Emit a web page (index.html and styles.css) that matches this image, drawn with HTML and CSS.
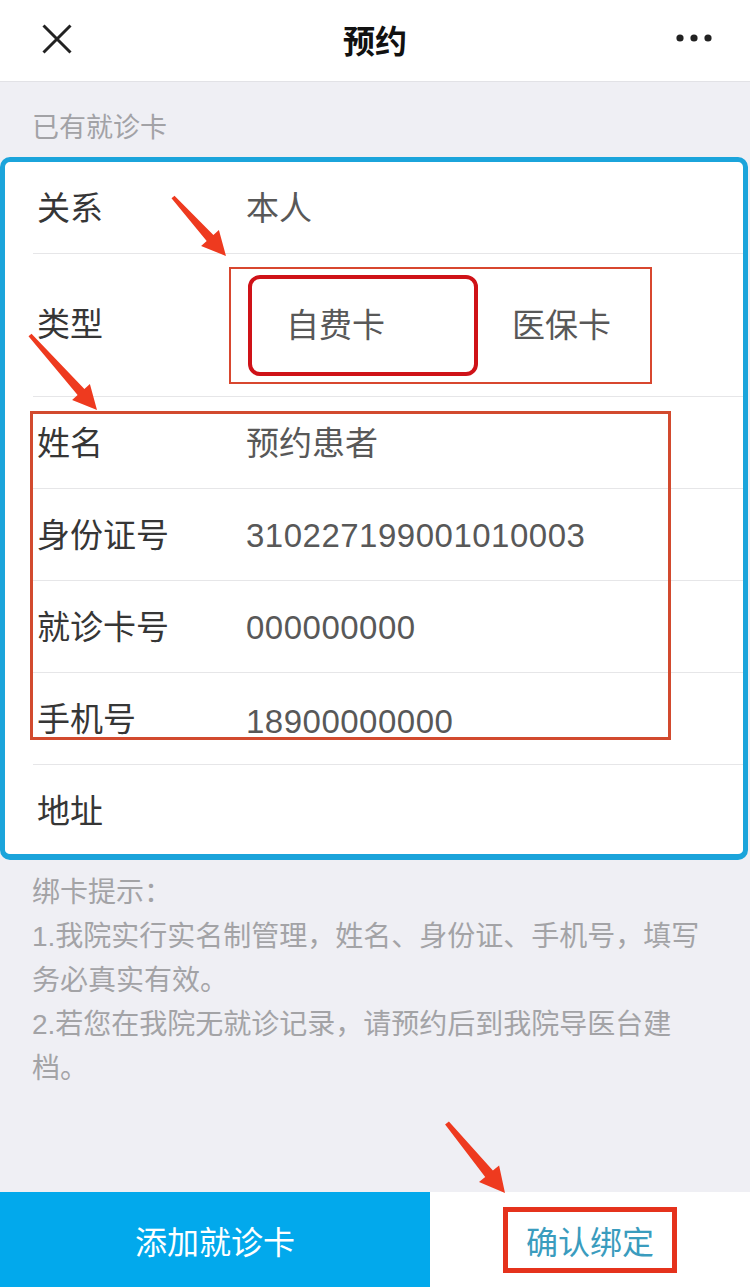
FILE: index.html
```html
<!DOCTYPE html>
<html lang="zh-CN">
<head>
<meta charset="utf-8">
<title>预约</title>
<link rel="stylesheet" href="styles.css">
</head>
<body>
<div class="page">
  <header class="topbar">
    <div class="tb-left">
      <svg class="icon-close" width="30" height="30" viewBox="0 0 30 30"><path d="M1.5 1.5 L28.5 28.5 M28.5 1.5 L1.5 28.5" stroke="#222" stroke-width="3" fill="none"/></svg>
    </div>
    <div class="tb-title">预约</div>
    <div class="tb-right">
      <svg class="icon-more" width="36" height="10" viewBox="0 0 36 10"><circle cx="4" cy="5" r="3.6" fill="#222"/><circle cx="18" cy="5" r="3.6" fill="#222"/><circle cx="32" cy="5" r="3.6" fill="#222"/></svg>
    </div>
  </header>

  <main class="content">
    <div class="section-title">已有就诊卡</div>
    <div class="card">
      <div class="row">
        <div class="label">关系</div>
        <div class="value">本人</div>
      </div>
      <div class="row row-type">
        <div class="label">类型</div>
        <div class="options">
          <div class="opt picked">自费卡</div>
          <div class="opt">医保卡</div>
        </div>
      </div>
      <div class="row">
        <div class="label">姓名</div>
        <div class="value">预约患者</div>
      </div>
      <div class="row">
        <div class="label">身份证号</div>
        <div class="value num">310227199001010003</div>
      </div>
      <div class="row">
        <div class="label">就诊卡号</div>
        <div class="value num">000000000</div>
      </div>
      <div class="row">
        <div class="label">手机号</div>
        <div class="value num low">18900000000</div>
      </div>
      <div class="row last">
        <div class="label">地址</div>
        <div class="value"></div>
      </div>
    </div>
    <div class="hint">
      <p>绑卡提示：</p>
      <p>1.我院实行实名制管理，姓名、身份证、手机号，填写务必真实有效。</p>
      <p>2.若您在我院无就诊记录，请预约后到我院导医台建档。</p>
    </div>
  </main>

  <footer class="bottombar">
    <div class="btn-add">添加就诊卡</div>
    <div class="btn-confirm"><span class="confirm-box">确认绑定</span></div>
  </footer>

  <svg class="marks" width="750" height="1287" viewBox="0 0 750 1287">
    <rect x="230" y="268" width="421" height="115" fill="none" stroke="#d8472f" stroke-width="2"/>
    <rect x="31.5" y="412.5" width="638" height="326" fill="none" stroke="#d24a2e" stroke-width="3"/>
    <g fill="#ee3a1f">
      <polygon points="174.5,195.7 213.4,235.1 218.9,230.1 226,256 201.1,246.1 206.7,241.1 171.5,198.3"/>
      <polygon points="31.5,333.7 84.4,389.1 89.9,384.1 97,410 72.1,400.1 77.6,395.1 28.5,336.3"/>
      <polygon points="448.9,1121.4 492.9,1170.6 499.1,1165.5 505,1193 479.0,1182.0 485.2,1176.9 445.1,1124.6"/>
    </g>
  </svg>
</div>
</body>
</html>
```

FILE: styles.css
```css
html, body {
  margin: 0;
  padding: 0;
}
body {
  font-family: "Liberation Sans", "Noto Sans CJK SC", sans-serif;
  background: #efeff4;
}
.page {
  position: relative;
  width: 750px;
  height: 1287px;
  display: flex;
  flex-direction: column;
  overflow: hidden;
}
.topbar {
  height: 81px;
  background: #fff;
  border-bottom: 1px solid #e2e2e6;
  display: grid;
  grid-template-columns: 1fr auto 1fr;
  align-items: center;
  flex: none;
}
.tb-left {
  padding-left: 42px;
  display: flex;
  align-items: center;
  padding-bottom: 4px;
}
.tb-title {
  font-family: "Noto Sans CJK SC", sans-serif;
  font-weight: bold;
  font-size: 32px;
  color: #111;
  line-height: 40px;
  padding-bottom: 4px;
}
.tb-right {
  display: flex;
  justify-content: flex-end;
  padding-right: 38px;
  padding-bottom: 6px;
}
.content {
  flex: 1;
  display: flex;
  flex-direction: column;
}
.section-title {
  font-family: "Noto Sans CJK SC", sans-serif;
  font-size: 27px;
  line-height: 28px;
  color: #a2a2a6;
  padding: 30px 0 0 32px;
  margin-bottom: 17px;
}
.card {
  margin-right: 2px;
  height: 703px;
  box-sizing: border-box;
  border: 5px solid #1ba4db;
  border-bottom-width: 6px;
  border-radius: 10px;
  background: #fff;
  display: flex;
  flex-direction: column;
}
.row {
  display: flex;
  align-items: center;
  height: 92px;
  flex: none;
  box-sizing: border-box;
  margin-left: 28px;
  padding-left: 4px;
  padding-top: 3px;
  border-bottom: 1px solid #e6e6e8;
}
.row-type {
  height: 143px;
  padding-top: 0;
}
.row.last {
  border-bottom: none;
  height: 91px;
}
.label {
  width: 209px;
  flex: none;
  font-size: 33px;
  color: #363636;
  line-height: 40px;
}
.value {
  font-size: 33px;
  color: #585858;
  line-height: 40px;
}
.value.num {
  letter-spacing: 0.5px;
}
.value.low {
  padding-top: 4px;
}
.options {
  display: flex;
  align-items: center;
  margin-left: 2px;
}
.opt {
  box-sizing: border-box;
  height: 101px;
  border: 4px solid transparent;
  border-radius: 12px;
  padding-left: 30px;
  padding-bottom: 4px;
  display: flex;
  align-items: center;
  font-size: 33px;
  color: #585858;
}
.opt.picked {
  width: 230px;
  border-color: #cf1218;
  padding-left: 34px;
}
.hint {
  margin-top: 11px;
  padding: 0 33px 0 32px;
  font-family: "Liberation Sans", "Noto Sans CJK SC", sans-serif;
  font-size: 28px;
  line-height: 44px;
  color: #a3a3a6;
}
.hint p {
  margin: 0;
}
.bottombar {
  height: 95px;
  flex: none;
  display: flex;
}
.btn-add {
  width: 430px;
  background: #02a9ec;
  color: #fff;
  font-family: "Noto Sans CJK SC", sans-serif;
  font-size: 32px;
  display: flex;
  align-items: center;
  justify-content: center;
}
.btn-confirm {
  flex: 1;
  background: #fff;
  display: flex;
  align-items: center;
  justify-content: center;
}
.confirm-box {
  display: inline-block;
  border: 5px solid #e5321c;
  padding: 0 18px;
  line-height: 56px;
  font-family: "Noto Sans CJK SC", sans-serif;
  font-size: 32px;
  color: #3a9cbe;
}
.marks {
  position: absolute;
  left: 0;
  top: 0;
  pointer-events: none;
}
```
